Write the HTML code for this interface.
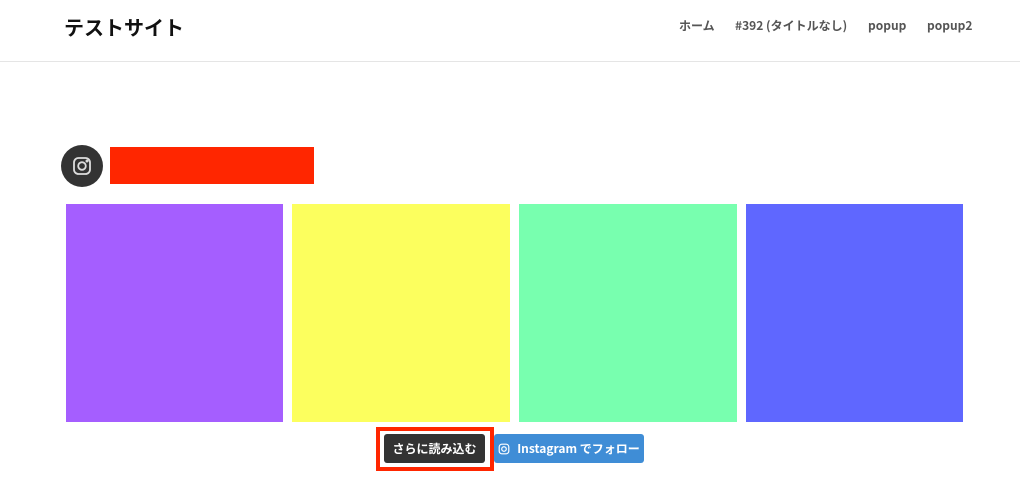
<!DOCTYPE html>
<html><head><meta charset="utf-8"><style>
body{margin:0;width:1020px;height:503px;background:#fff;position:relative;overflow:hidden;font-family:"Liberation Sans","Noto Sans CJK JP",sans-serif}
.a{position:absolute}
.title{left:64px;top:12px;font-size:20px;font-weight:bold;color:#111;font-family:"Noto Sans CJK JP",sans-serif}
.nav{top:17px;font-size:12px;font-weight:bold;color:#555;font-family:"Noto Sans CJK JP",sans-serif}
.sq{top:204px;height:218px;width:218px}
.btn{top:434px;height:29px;border-radius:3px;color:#fff;font-size:12px;font-weight:bold;font-family:"Noto Sans CJK JP",sans-serif;display:flex;align-items:center;justify-content:center}
</style></head><body>
<div class="a title">テストサイト</div>
<div class="a nav" style="left:679px">ホーム</div>
<div class="a nav" style="left:735px">#392 (タイトルなし)</div>
<div class="a nav" style="left:868px">popup</div>
<div class="a nav" style="left:927px">popup2</div>
<div class="a" style="left:0;top:61px;width:1020px;height:1px;background:#e5e5e5"></div>
<div class="a" style="left:61px;top:145px;width:42px;height:42px;border-radius:50%;background:#333"></div>
<svg class="a" style="left:72px;top:156px" width="20" height="20" viewBox="0 0 20 20" fill="none" stroke="#ddd" stroke-width="1.8"><rect x="2" y="2" width="16" height="16" rx="4.5"/><circle cx="10" cy="10" r="3.8"/><circle cx="15" cy="5" r=".6" fill="#ddd"/></svg>
<div class="a" style="left:110px;top:147px;width:204px;height:37px;background:#ff2600"></div>
<div class="a sq" style="left:66px;width:217px;background:#a55eff"></div>
<div class="a sq" style="left:292px;background:#fcff5e"></div>
<div class="a sq" style="left:519px;background:#78ffaf"></div>
<div class="a sq" style="left:746px;width:217px;background:#5f67ff"></div>
<div class="a" style="left:376px;top:427px;width:110px;height:36px;border:4px solid #ff2600"></div>
<div class="a btn" style="left:384px;width:101px;background:#333">さらに読み込む</div>
<div class="a btn" style="left:494px;width:150px;background:#3f8dd6">
<svg width="12" height="12" viewBox="0 0 20 20" fill="none" stroke="#fff" stroke-width="2" style="margin-right:7px"><rect x="2" y="2" width="16" height="16" rx="4.5"/><circle cx="10" cy="10" r="3.8"/></svg>Instagram でフォロー</div>
</body></html>
